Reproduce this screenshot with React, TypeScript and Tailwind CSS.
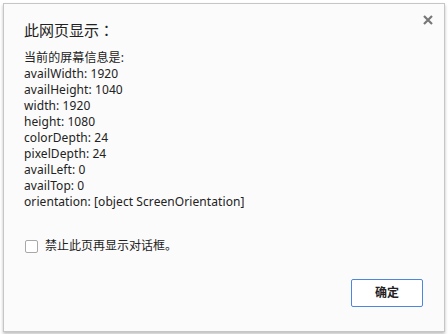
import React from "react";

const lines = [
  "当前的屏幕信息是:",
  "availWidth: 1920",
  "availHeight: 1040",
  "width: 1920",
  "height: 1080",
  "colorDepth: 24",
  "pixelDepth: 24",
  "availLeft: 0",
  "availTop: 0",
  "orientation: [object ScreenOrientation]",
];

export default function App() {
  return (
    <div
      className="w-[448px] h-[334px] bg-white pt-[3px] pl-[3px]"
      style={{ fontFamily: '"Noto Sans", "Noto Sans CJK SC", sans-serif' }}
    >
      <div className="relative w-[442px] h-[329px] border border-[#c6c6c6] bg-[#fbfbfb] shadow-[0_2px_3px_rgba(0,0,0,0.25)] flex flex-col pl-[20px] pr-[21px]">
        <div className="absolute right-[10px] top-[10px] w-[12px] h-[12px] flex items-center justify-center">
          <svg width="10" height="10" viewBox="0 0 10 10">
            <path d="M1 1 L9 9 M9 1 L1 9" stroke="#777" strokeWidth="2.2" />
          </svg>
        </div>
        <div
          className="mt-[15px] h-[22px] leading-[22px] text-[15px] text-[#222]"
          style={{ fontFamily: '"Noto Sans CJK SC", sans-serif' }}
        >
          此网页显示
          <span style={{ fontFamily: '"Noto Sans CJK JP", sans-serif' }}>：</span>
        </div>
        <div className="mt-[9px] flex flex-col text-[12px] leading-[16px] tracking-[0.08px] text-[#222]">
          {lines.map((l) => (
            <div key={l} className="h-[16px]">{l}</div>
          ))}
        </div>
        <div className="mt-[28px] flex items-center gap-[7px]">
          <div className="w-[13px] h-[13px] ml-[1px] rounded-[2px] border border-[#a8a8a8] bg-white" />
          <span className="text-[12px] leading-[16px] text-[#222]">禁止此页再显示对话框。</span>
        </div>
        <div className="mt-auto mb-[24px] flex justify-end">
          <button className="w-[72px] h-[28px] rounded-[2px] border border-[#4d87dd] bg-white text-[12px] font-bold text-[#222] flex items-center justify-center">
            确定
          </button>
        </div>
      </div>
    </div>
  );
}
